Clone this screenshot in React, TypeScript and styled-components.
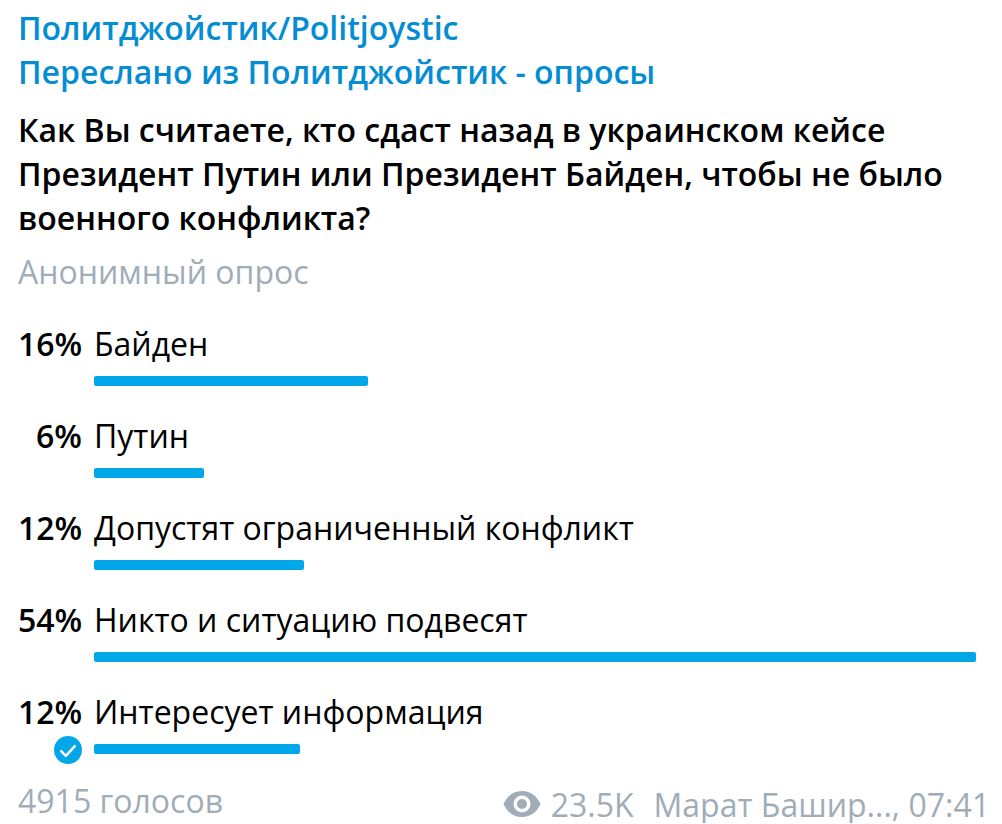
import React from "react";
import styled, { createGlobalStyle } from "styled-components";

const Global = createGlobalStyle`
  * { box-sizing: border-box; }
  body { margin: 0; background: #fff; color: #000; font-family: "Open Sans", sans-serif; font-size: 32px; line-height: 44px; }
`;

const Message = styled.article`
  padding: 6px 12px 0 18px;
`;

const SourceLink = styled.a`
  display: block;
  color: #058dd3;
  font-weight: 600;
  text-decoration: none;
`;

const Question = styled.h1`
  margin: 14px 0 0;
  font-size: 32px;
  line-height: 44px;
  font-weight: 600;
`;

const Kind = styled.p`
  margin: 10px 0 0;
  color: #a0adb8;
`;

const Options = styled.ul`
  display: grid;
  gap: 18px;
  list-style: none;
  margin: 28px 0 0;
  padding: 0 14px 0 0;
`;

const Option = styled.li`
  display: grid;
  grid-template-columns: 64px 1fr;
  grid-template-rows: 44px 30px;
  column-gap: 12px;
`;

const Percent = styled.span`
  text-align: right;
  font-weight: 600;
`;

const Mark = styled.span`
  display: flex;
  justify-content: flex-end;
  padding-top: 2px;
`;

const Track = styled.div`
  padding-top: 10px;
`;

const Bar = styled.div`
  height: 10px;
  border-radius: 2px;
  background: #02a7ea;
`;

const Footer = styled.footer`
  display: flex;
  justify-content: space-between;
  margin-top: 19px;
  line-height: 36px;
  color: #a0adb8;
`;

const Meta = styled.div`
  display: flex;
  align-items: center;
  padding-top: 4px;
`;

const Views = styled.span`
  margin: 0 20px 0 10px;
`;

const options = [
  { percent: 16, label: "Байден", width: 31.1 },
  { percent: 6, label: "Путин", width: 12.5 },
  { percent: 12, label: "Допустят ограниченный конфликт", width: 23.8 },
  { percent: 54, label: "Никто и ситуацию подвесят", width: 100 },
  { percent: 12, label: "Интересует информация", width: 23.4, chosen: true },
];

const Check = () => (
  <svg width="28" height="28" viewBox="0 0 28 28" role="img" aria-label="Ваш выбор">
    <circle cx="14" cy="14" r="14" fill="#02a7ea" />
    <path d="M7.200 15.200l4.600 4.600 9-9.600" fill="none" stroke="#fff" strokeWidth="2.600" strokeLinecap="round" strokeLinejoin="round" />
  </svg>
);

const Eye = () => (
  <svg width="38" height="28" viewBox="0 0 38 28" aria-hidden="true">
    <path fillRule="evenodd" fill="#a0adb8" d="M19 0C10.500 0 4 5 0.500 13c3.500 8 10 13 18.500 13s15-5 18.500-13C34 5 27.500 0 19 0zM19 4.500a8.500 8.500 0 1 1 0 17a8.500 8.500 0 0 1 0-17zM19 8a5 5 0 1 0 0 10a5 5 0 0 0 0-10z" />
  </svg>
);

export default function App() {
  return (
    <>
      <Global />
      <Message>
        <SourceLink href="#channel">Политджойстик/Politjoystic</SourceLink>
        <SourceLink href="#source">Переслано из Политджойстик - опросы</SourceLink>
        <Question>
          Как Вы считаете, кто сдаст назад в украинском кейсе Президент Путин или Президент Байден, чтобы не было военного конфликта?
        </Question>
        <Kind>Анонимный опрос</Kind>
        <Options>
          {options.map((o) => (
            <Option key={o.label}>
              <Percent>{o.percent}%</Percent>
              <span>{o.label}</span>
              <Mark>{o.chosen && <Check />}</Mark>
              <Track><Bar style={{ width: `${o.width}%` }} /></Track>
            </Option>
          ))}
        </Options>
        <Footer>
          <span>4915 голосов</span>
          <Meta>
            <Eye />
            <Views>23.5K</Views>
            <span>Марат Башир..., 07:41</span>
          </Meta>
        </Footer>
      </Message>
    </>
  );
}
